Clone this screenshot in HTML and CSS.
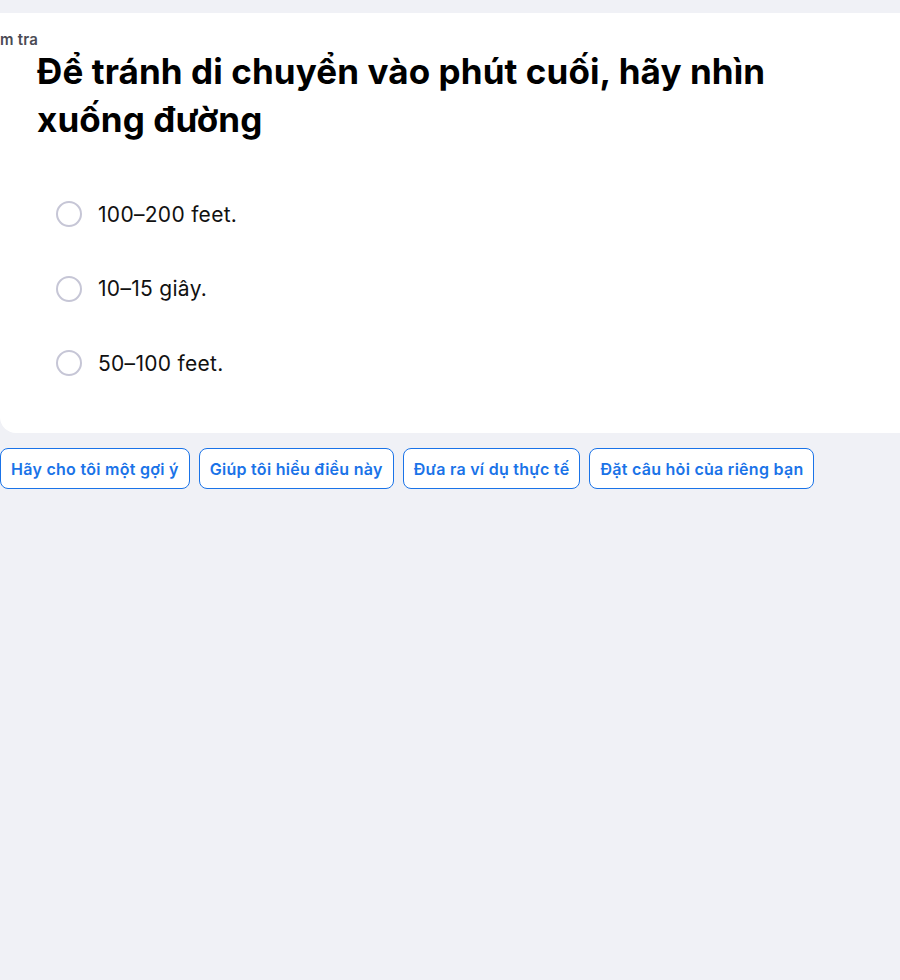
FILE: index.html
```html
<!DOCTYPE html>
<html lang="vi">
<head>
<meta charset="utf-8">
<link rel="stylesheet" href="styles.css">
</head>
<body>
<div class="page">
  <section class="card">
    <div class="label">Kiểm tra</div>
    <h1 class="title">Để tránh di chuyển vào phút cuối, hãy nhìn xuống đường</h1>
    <ul class="options">
      <li class="option"><span class="radio"></span><span class="opt-text">100–200 feet.</span></li>
      <li class="option"><span class="radio"></span><span class="opt-text">10–15 giây.</span></li>
      <li class="option"><span class="radio"></span><span class="opt-text">50–100 feet.</span></li>
    </ul>
  </section>
  <div class="chips">
    <button class="chip">Hãy cho tôi một gợi ý</button>
    <button class="chip">Giúp tôi hiểu điều này</button>
    <button class="chip">Đưa ra ví dụ thực tế</button>
    <button class="chip">Đặt câu hỏi của riêng bạn</button>
  </div>
</div>
</body>
</html>
```
FILE: styles.css
```css
html, body {
  margin: 0;
  padding: 0;
  background: #f0f1f6;
  overflow: hidden;
}
body {
  font-family: "Inter", "Liberation Sans", sans-serif;
  color: #111;
  height: 980px;
}
.page {
  padding-top: 13px;
}
.card {
  background: #fff;
  width: 916px;
  border-radius: 0 16px 16px 16px;
  padding: 18px 0 0 0;
  box-sizing: border-box;
  height: 420px;
}
.label {
  margin-left: -24px;
  font-size: 15px;
  font-weight: 600;
  letter-spacing: 0.2px;
  color: #4b4b55;
  line-height: 18px;
}
.title {
  margin: -2px 0 0 37px;
  font-size: 35px;
  font-weight: 700;
  letter-spacing: 0.1px;
  line-height: 48px;
  color: #000;
  max-width: 800px;
}
.options {
  list-style: none;
  margin: 58px 0 0 0;
  padding: 0 0 0 56px;
  display: flex;
  flex-direction: column;
  gap: 48.5px;
}
.option {
  display: flex;
  align-items: center;
  gap: 16px;
  height: 26px;
}
.radio {
  width: 22px;
  height: 22px;
  border: 2px solid #c6c6d6;
  border-radius: 50%;
  flex: none;
}
.opt-text {
  font-size: 21px;
  letter-spacing: 0.3px;
  color: #111;
}
.chips {
  display: flex;
  gap: 9px;
  margin-top: 15px;
}
.chip {
  font-family: inherit;
  font-size: 16px;
  font-weight: 600;
  letter-spacing: 0.28px;
  color: #1a73e8;
  background: #fff;
  border: 1px solid #1a73e8;
  border-radius: 8px;
  height: 41px;
  padding: 0 10px;
  cursor: pointer;
}
```
